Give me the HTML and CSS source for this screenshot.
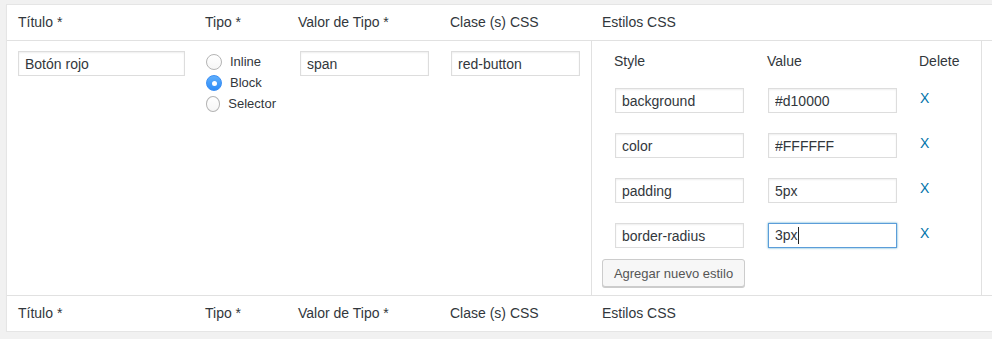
FILE: index.html
```html
<!DOCTYPE html>
<html lang="es">
<head>
<meta charset="utf-8">
<title>Estilos</title>
<link rel="stylesheet" href="styles.css">
</head>
<body>
<div class="table">
  <div class="row head">
    <div class="th">Título *</div>
    <div class="th">Tipo *</div>
    <div class="th">Valor de Tipo *</div>
    <div class="th">Clase (s) CSS</div>
    <div class="th">Estilos CSS</div>
  </div>
  <div class="row body">
    <div class="td"><input class="field w-title" type="text" value="Botón rojo"></div>
    <div class="td radios">
      <label class="radio"><span class="dot"></span>Inline</label>
      <label class="radio"><span class="dot checked"></span>Block</label>
      <label class="radio"><span class="dot"></span>Selector</label>
    </div>
    <div class="td"><input class="field w-small shift2" type="text" value="span"></div>
    <div class="td"><input class="field w-small shift1" type="text" value="red-button"></div>
    <div class="td styles">
      <div class="srow shead">
        <div>Style</div><div>Value</div><div>Delete</div>
      </div>
      <div class="slist">
        <div class="srow">
          <input class="field w-small" type="text" value="background">
          <input class="field w-small" type="text" value="#d10000">
          <a class="del">X</a>
        </div>
        <div class="srow">
          <input class="field w-small" type="text" value="color">
          <input class="field w-small" type="text" value="#FFFFFF">
          <a class="del">X</a>
        </div>
        <div class="srow">
          <input class="field w-small" type="text" value="padding">
          <input class="field w-small" type="text" value="5px">
          <a class="del">X</a>
        </div>
        <div class="srow">
          <input class="field w-small" type="text" value="border-radius">
          <span class="field w-small focused">3px<span class="caret"></span></span>
          <a class="del">X</a>
        </div>
      </div>
      <button class="btn" type="button">Agregar nuevo estilo</button>
    </div>
  </div>
  <div class="row foot">
    <div class="th">Título *</div>
    <div class="th">Tipo *</div>
    <div class="th">Valor de Tipo *</div>
    <div class="th">Clase (s) CSS</div>
    <div class="th">Estilos CSS</div>
  </div>
</div>
</body>
</html>
```

FILE: styles.css
```css
html, body {
  margin: 0;
  padding: 0;
  overflow: hidden;
  background: #f1f1f1;
  font-family: "Liberation Sans", Arial, sans-serif;
  color: #32373c;
}

.table {
  margin: 4px 0 0 6px;
  width: 1000px;
  background: #fff;
  border: 1px solid #e5e5e5;
  box-shadow: 0 1px 1px rgba(0, 0, 0, 0.04);
}

.row {
  display: grid;
  grid-template-columns: 187px 93px 152px 152px 1fr;
}

.head {
  border-bottom: 1px solid #e1e1e1;
}

.foot {
  border-top: 1px solid #e1e1e1;
}

.th {
  height: 35px;
  line-height: 35px;
  padding: 0 11px;
  font-size: 14px;
  color: #32373c;
}

.td {
  padding: 10px 11px 0;
}

.field {
  display: block;
  box-sizing: border-box;
  height: 25px;
  margin: 0;
  padding: 0 6px;
  border: 1px solid #ddd;
  border-radius: 0;
  background: #fff;
  box-shadow: inset 0 1px 2px rgba(0, 0, 0, 0.07);
  font-family: "Liberation Sans", Arial, sans-serif;
  font-size: 14px;
  line-height: 23px;
  color: #32373c;
  outline: none;
}

.w-title { width: 167px; }
.w-small { width: 129px; }
.shift2 { margin-left: 2px; }
.shift1 { margin-left: 1px; }

.focused {
  border-color: #5b9dd9;
  box-shadow: 0 0 2px rgba(30, 140, 190, 0.8);
  display: flex;
  align-items: center;
}

.caret {
  display: inline-block;
  width: 1px;
  height: 17px;
  background: #222;
  margin-left: 0;
}

.radios {
  display: flex;
  flex-direction: column;
  padding-left: 12px;
}

.radio {
  display: flex;
  align-items: center;
  height: 21px;
  font-size: 13px;
  color: #32373c;
}

.dot {
  box-sizing: border-box;
  width: 16px;
  height: 16px;
  border-radius: 50%;
  border: 1px solid #b4b4b4;
  background: linear-gradient(#fff, #f6f6f6);
  margin-right: 8px;
  position: relative;
}

.dot.checked {
  border-color: #3a8ff5;
  background: linear-gradient(#5eaefc, #2d8cf7);
}

.dot.checked::after {
  content: "";
  position: absolute;
  left: 5px;
  top: 5px;
  width: 5px;
  height: 5px;
  border-radius: 50%;
  background: #fff;
}

.styles {
  width: 391px;
  box-sizing: border-box;
  border-left: 1px solid #e1e1e1;
  border-right: 1px solid #e1e1e1;
  padding: 10px 0 8px 0;
}

.srow {
  display: grid;
  grid-template-columns: 153px 152px auto;
  align-items: start;
  padding-left: 23px;
}

.shead {
  padding-left: 22px;
  font-size: 14px;
  line-height: 20px;
}

.shead div:nth-child(2) { padding-left: 0; }

.slist {
  display: flex;
  flex-direction: column;
  gap: 20px;
  margin-top: 17px;
}

.del {
  font-size: 14px;
  line-height: 20px;
  color: #0073aa;
  margin-left: 0;
}

.btn {
  display: block;
  margin: 11px 0 0 10px;
  width: 143px;
  height: 28px;
  padding: 0;
  border: 1px solid #ccc;
  border-radius: 3px;
  background: #f7f7f7;
  box-shadow: 0 1px 0 #ccc;
  font-family: "Liberation Sans", Arial, sans-serif;
  font-size: 13px;
  color: #555;
}
```
